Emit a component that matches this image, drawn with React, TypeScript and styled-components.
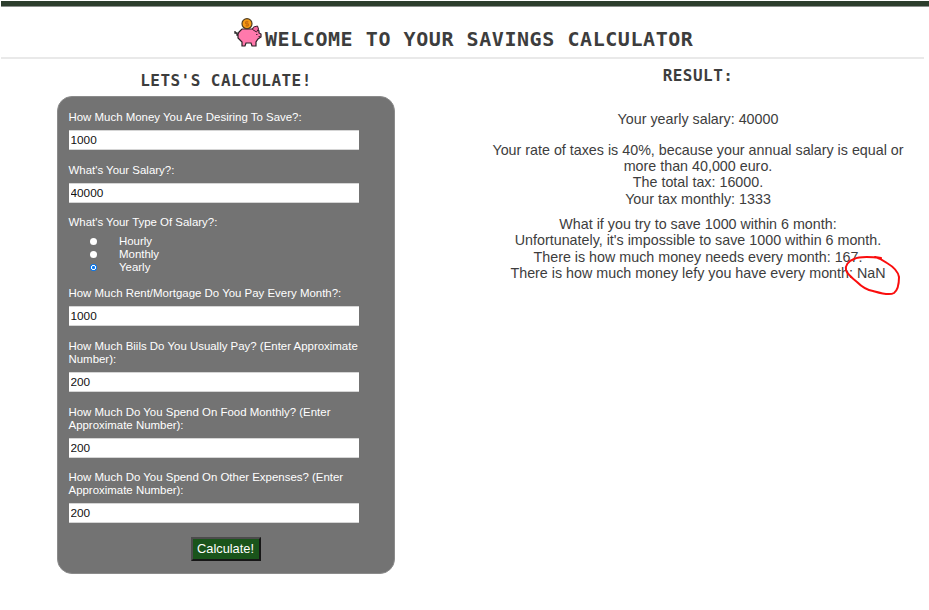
import React, { useState } from "react";
import styled, { createGlobalStyle } from "styled-components";

const GlobalStyle = createGlobalStyle`
  * { box-sizing: border-box; }
  body {
    margin: 0;
    background: #fff;
    color: #3d3d3d;
    font-family: "Liberation Sans", Arial, sans-serif;
    overflow: hidden;
  }
`;

const Page = styled.div`
  height: 610px;
  padding: 1px 0 0 1px;
`;

const TopBar = styled.div`
  height: 6px;
  background: #2c3e2d;
  border-bottom: 1px solid #8d918e;
`;

const Header = styled.header`
  width: 923px;
  height: 52px;
  padding: 11px 0 0 233px;
  display: flex;
  align-items: flex-start;
  border-bottom: 2px solid #e9e9e9;
`;

const PigSvg = styled.svg`
  width: 29px;
  height: 30px;
  flex: none;
`;

const Title = styled.h1`
  margin: 9px 0 0 2px;
  font: bold 20px/24px "DejaVu Sans Mono", monospace;
  letter-spacing: 0.56px;
  white-space: nowrap;
`;

const Columns = styled.main`
  display: grid;
  grid-template-columns: 338px 1fr;
  padding-left: 56px;
`;

const Heading = styled.h2<{ $top: number }>`
  margin: ${(p) => p.$top}px 0 0;
  font: bold 16px/20px "DejaVu Sans Mono", monospace;
  letter-spacing: 0.46px;
  text-align: center;
  white-space: nowrap;
`;

const Form = styled.form`
  height: 478px;
  margin-top: 5px;
  padding: 14.45px 36px 0 10.5px;
  border: 1px solid #8b8b8b;
  border-radius: 15px;
  background: #737373;
  color: #fff;
  display: flex;
  flex-direction: column;
`;

const Field = styled.label`
  display: block;
  margin-bottom: 13.5px;
  font-size: 11.45px;
  line-height: 13.1px;
`;

const TextInput = styled.input`
  display: block;
  width: 290.5px;
  height: 20px;
  margin-top: 5.9px;
  padding: 0 2px;
  border: 1px solid #d5d5d5;
  border-width: 1px 0;
  background: #fff;
  color: #111;
  outline: 0;
  font: 11.8px "Liberation Sans", Arial, sans-serif;
`;

const Group = styled.div`
  margin-bottom: 13.5px;
  font-size: 11.45px;
  line-height: 13.1px;
`;

const Options = styled.div`
  margin-top: 5.2px;
`;

const Option = styled.label`
  display: flex;
  align-items: center;
  gap: 22px;
  height: 13.1px;
  padding-left: 21.5px;
`;

const Radio = styled.input`
  appearance: none;
  width: 7px;
  height: 7px;
  margin: 0;
  border-radius: 50%;
  background: #fff;
  &:checked {
    background: radial-gradient(circle, #0878f0 0 1.3px, #fff 1.7px 2.2px, #0878f0 2.7px);
  }
`;

const Submit = styled.button`
  width: 70px;
  height: 24px;
  margin: 0 0 0 122px;
  padding: 0;
  border: 2px solid;
  border-color: #4b4b4b #161616 #161616 #4b4b4b;
  background: #1a541b;
  color: #fff;
  font: 12.8px/19px "Liberation Sans", Arial, sans-serif;
`;

const Result = styled.section`
  width: 420px;
  margin-left: 93px;
  text-align: center;
  font-size: 14.3px;
  line-height: 16.3px;
`;

const Paragraph = styled.p<{ $gap: number }>`
  margin: ${(p) => p.$gap}px 0 0;
  white-space: nowrap;
`;

const Marked = styled.span`
  position: relative;
`;

const Circle = styled.svg`
  position: absolute;
  left: -14px;
  top: -10px;
  width: 60px;
  height: 44px;
  overflow: visible;
`;

function PiggyBank() {
  return (
    <PigSvg viewBox="0 0 29 30">
      <path d="M1 13v2h2v2h3" fill="none" stroke="#202020" strokeWidth="1.3" />
      <path
        d="M5 14l3-3h10l2-1 3 0 2 3 0 2 2 1v3l-3 2-2 3v4h-4l-1-3h-5l-1 3H8v-4l-4-4v-4z"
        fill="#ff79ac"
        stroke="#292126"
        strokeWidth="1.2"
      />
      <path d="M18.5 11.5l1-2.5 4-1 1 3-2 3z" fill="#f5679e" stroke="#40202e" strokeWidth="1" />
      <path d="M22 16.5h1.5M24.5 18.5h1.5" stroke="#512638" strokeWidth="1" />
      <circle cx="13" cy="5.7" r="5" fill="#f69b16" stroke="#4f3d20" strokeWidth="1.2" />
      <path d="M14.5 3.8h-3v2h3v2h-3M13 2.8v6" fill="none" stroke="#c66b0d" strokeWidth="1" />
    </PigSvg>
  );
}

function Question({ text, initial }: { text: React.ReactNode; initial: string }) {
  const [value, setValue] = useState(initial);
  return (
    <Field>
      {text}
      <TextInput value={value} onChange={(e) => setValue(e.target.value)} />
    </Field>
  );
}

export default function App() {
  const [period, setPeriod] = useState("Yearly");
  return (
    <Page>
      <GlobalStyle />
      <TopBar />
      <Header>
        <PiggyBank />
        <Title>WELCOME TO YOUR SAVINGS CALCULATOR</Title>
      </Header>
      <Columns>
        <section>
          <Heading $top={12}>LETS'S CALCULATE!</Heading>
          <Form onSubmit={(e) => e.preventDefault()}>
            <Question text="How Much Money You Are Desiring To Save?:" initial="1000" />
            <Question text="What's Your Salary?:" initial="40000" />
            <Group>
              What's Your Type Of Salary?:
              <Options>
                {["Hourly", "Monthly", "Yearly"].map((name) => (
                  <Option key={name}>
                    <Radio
                      type="radio"
                      name="period"
                      checked={period === name}
                      onChange={() => setPeriod(name)}
                    />
                    {name}
                  </Option>
                ))}
              </Options>
            </Group>
            <Question text="How Much Rent/Mortgage Do You Pay Every Month?:" initial="1000" />
            <Question
              text={<>How Much Biils Do You Usually Pay? (Enter Approximate<br />Number):</>}
              initial="200"
            />
            <Question
              text={<>How Much Do You Spend On Food Monthly? (Enter<br />Approximate Number):</>}
              initial="200"
            />
            <Question
              text={<>How Much Do You Spend On Other Expenses? (Enter<br />Approximate Number):</>}
              initial="200"
            />
            <Submit>Calculate!</Submit>
          </Form>
        </section>
        <Result>
          <Heading $top={7}>RESULT:</Heading>
          <Paragraph $gap={25}>Your yearly salary: 40000</Paragraph>
          <Paragraph $gap={14.5}>
            Your rate of taxes is 40%, because your annual salary is equal or<br />
            more than 40,000 euro.<br />
            The total tax: 16000.<br />
            Your tax monthly: 1333
          </Paragraph>
          <Paragraph $gap={9}>
            What if you try to save 1000 within 6 month:<br />
            Unfortunately, it's impossible to save 1000 within 6 month.<br />
            There is how much money needs every month: 167.<br />
            There is how much money lefy you have every month:{" "}
            <Marked>
              NaN
              <Circle viewBox="0 0 60 44">
                <path
                  d="M38 3C29 2 17 1 11 4 5 6 2 11 3 15c1 4 6 8 11 12 5 5 9 8 16 9 7 2 16 5 21 2 4-3 5-11 5-16-1-6-7-11-12-14-4-3-8-5-12-6l6 1"
                  fill="none"
                  stroke="#fa0d0d"
                  strokeWidth="2"
                  strokeLinecap="round"
                  strokeLinejoin="round"
                />
              </Circle>
            </Marked>
          </Paragraph>
        </Result>
      </Columns>
    </Page>
  );
}
